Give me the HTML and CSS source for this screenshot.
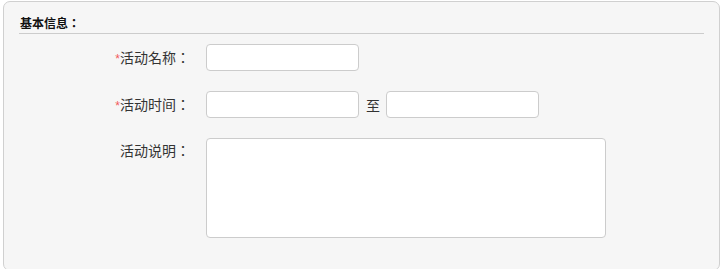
FILE: index.html
```html
<!DOCTYPE html>
<html lang="zh-CN">
<head>
    <meta charset="UTF-8" />
    <title>活动设置</title>
    <link rel="stylesheet" href="styles.css">
</head>
<body>
    <div class="panel">
        <h3 class="panel-title">基本信息：</h3>
        <div class="form-row">
            <label class="form-label"><span class="required">*</span>活动名称：</label>
            <input type="text" class="text-input" />
        </div>
        <div class="form-row">
            <label class="form-label"><span class="required">*</span>活动时间：</label>
            <input type="text" class="text-input" />
            <span class="range-sep">至</span>
            <input type="text" class="text-input" />
        </div>
        <div class="form-row form-row-top">
            <label class="form-label">活动说明：</label>
            <textarea class="text-area"></textarea>
        </div>
    </div>
</body>
</html>
```

FILE: styles.css
```css
body {
    margin: 0;
    padding: 0;
    background: #fff;
    font-family: "Noto Sans CJK TC", "Liberation Sans", sans-serif;
    font-feature-settings: "locl" 0;
    color: #333;
    text-spacing-trim: space-all;
}
.panel {
    box-sizing: border-box;
    margin: 1px 3px 0 3px;
    height: 270px;
    padding: 11px 15px 0 15px;
    background-color: #f6f6f6;
    border: 1px solid #d0d0d0;
    border-radius: 7px;
}
.panel-title {
    margin: 0;
    padding: 0 0 0 1px;
    height: 20px;
    line-height: 20px;
    font-size: 12px;
    font-weight: bold;
    color: #111;
    border-bottom: 1px solid #ccc;
}
.form-row {
    display: flex;
    align-items: center;
    margin-top: 10px;
}
.form-row + .form-row {
    margin-top: 20px;
}
.form-row-top {
    align-items: flex-start;
}
.form-label {
    display: block;
    width: 171px;
    height: 27px;
    text-align: right;
    font-size: 14px;
    line-height: 27px;
    color: #333;
}
.form-row-top .form-label {
    line-height: 24px;
}
.required {
    font-family: "Liberation Sans", sans-serif;
    color: #f2595b;
    font-size: 12px;
    line-height: 1;
}
.text-input {
    box-sizing: border-box;
    width: 153px;
    height: 27px;
    margin: 0 0 0 16px;
    padding: 0 6px;
    border: 1px solid #ccc;
    border-radius: 4px;
    background: #fff;
}
.range-sep {
    margin-left: 7px;
    font-size: 14px;
}
.range-sep + .text-input {
    margin-left: 6px;
}
.text-area {
    box-sizing: border-box;
    width: 400px;
    height: 100px;
    margin: 0 0 0 16px;
    padding: 4px 6px;
    border: 1px solid #ccc;
    border-radius: 4px;
    background: #fff;
    resize: none;
}
```
